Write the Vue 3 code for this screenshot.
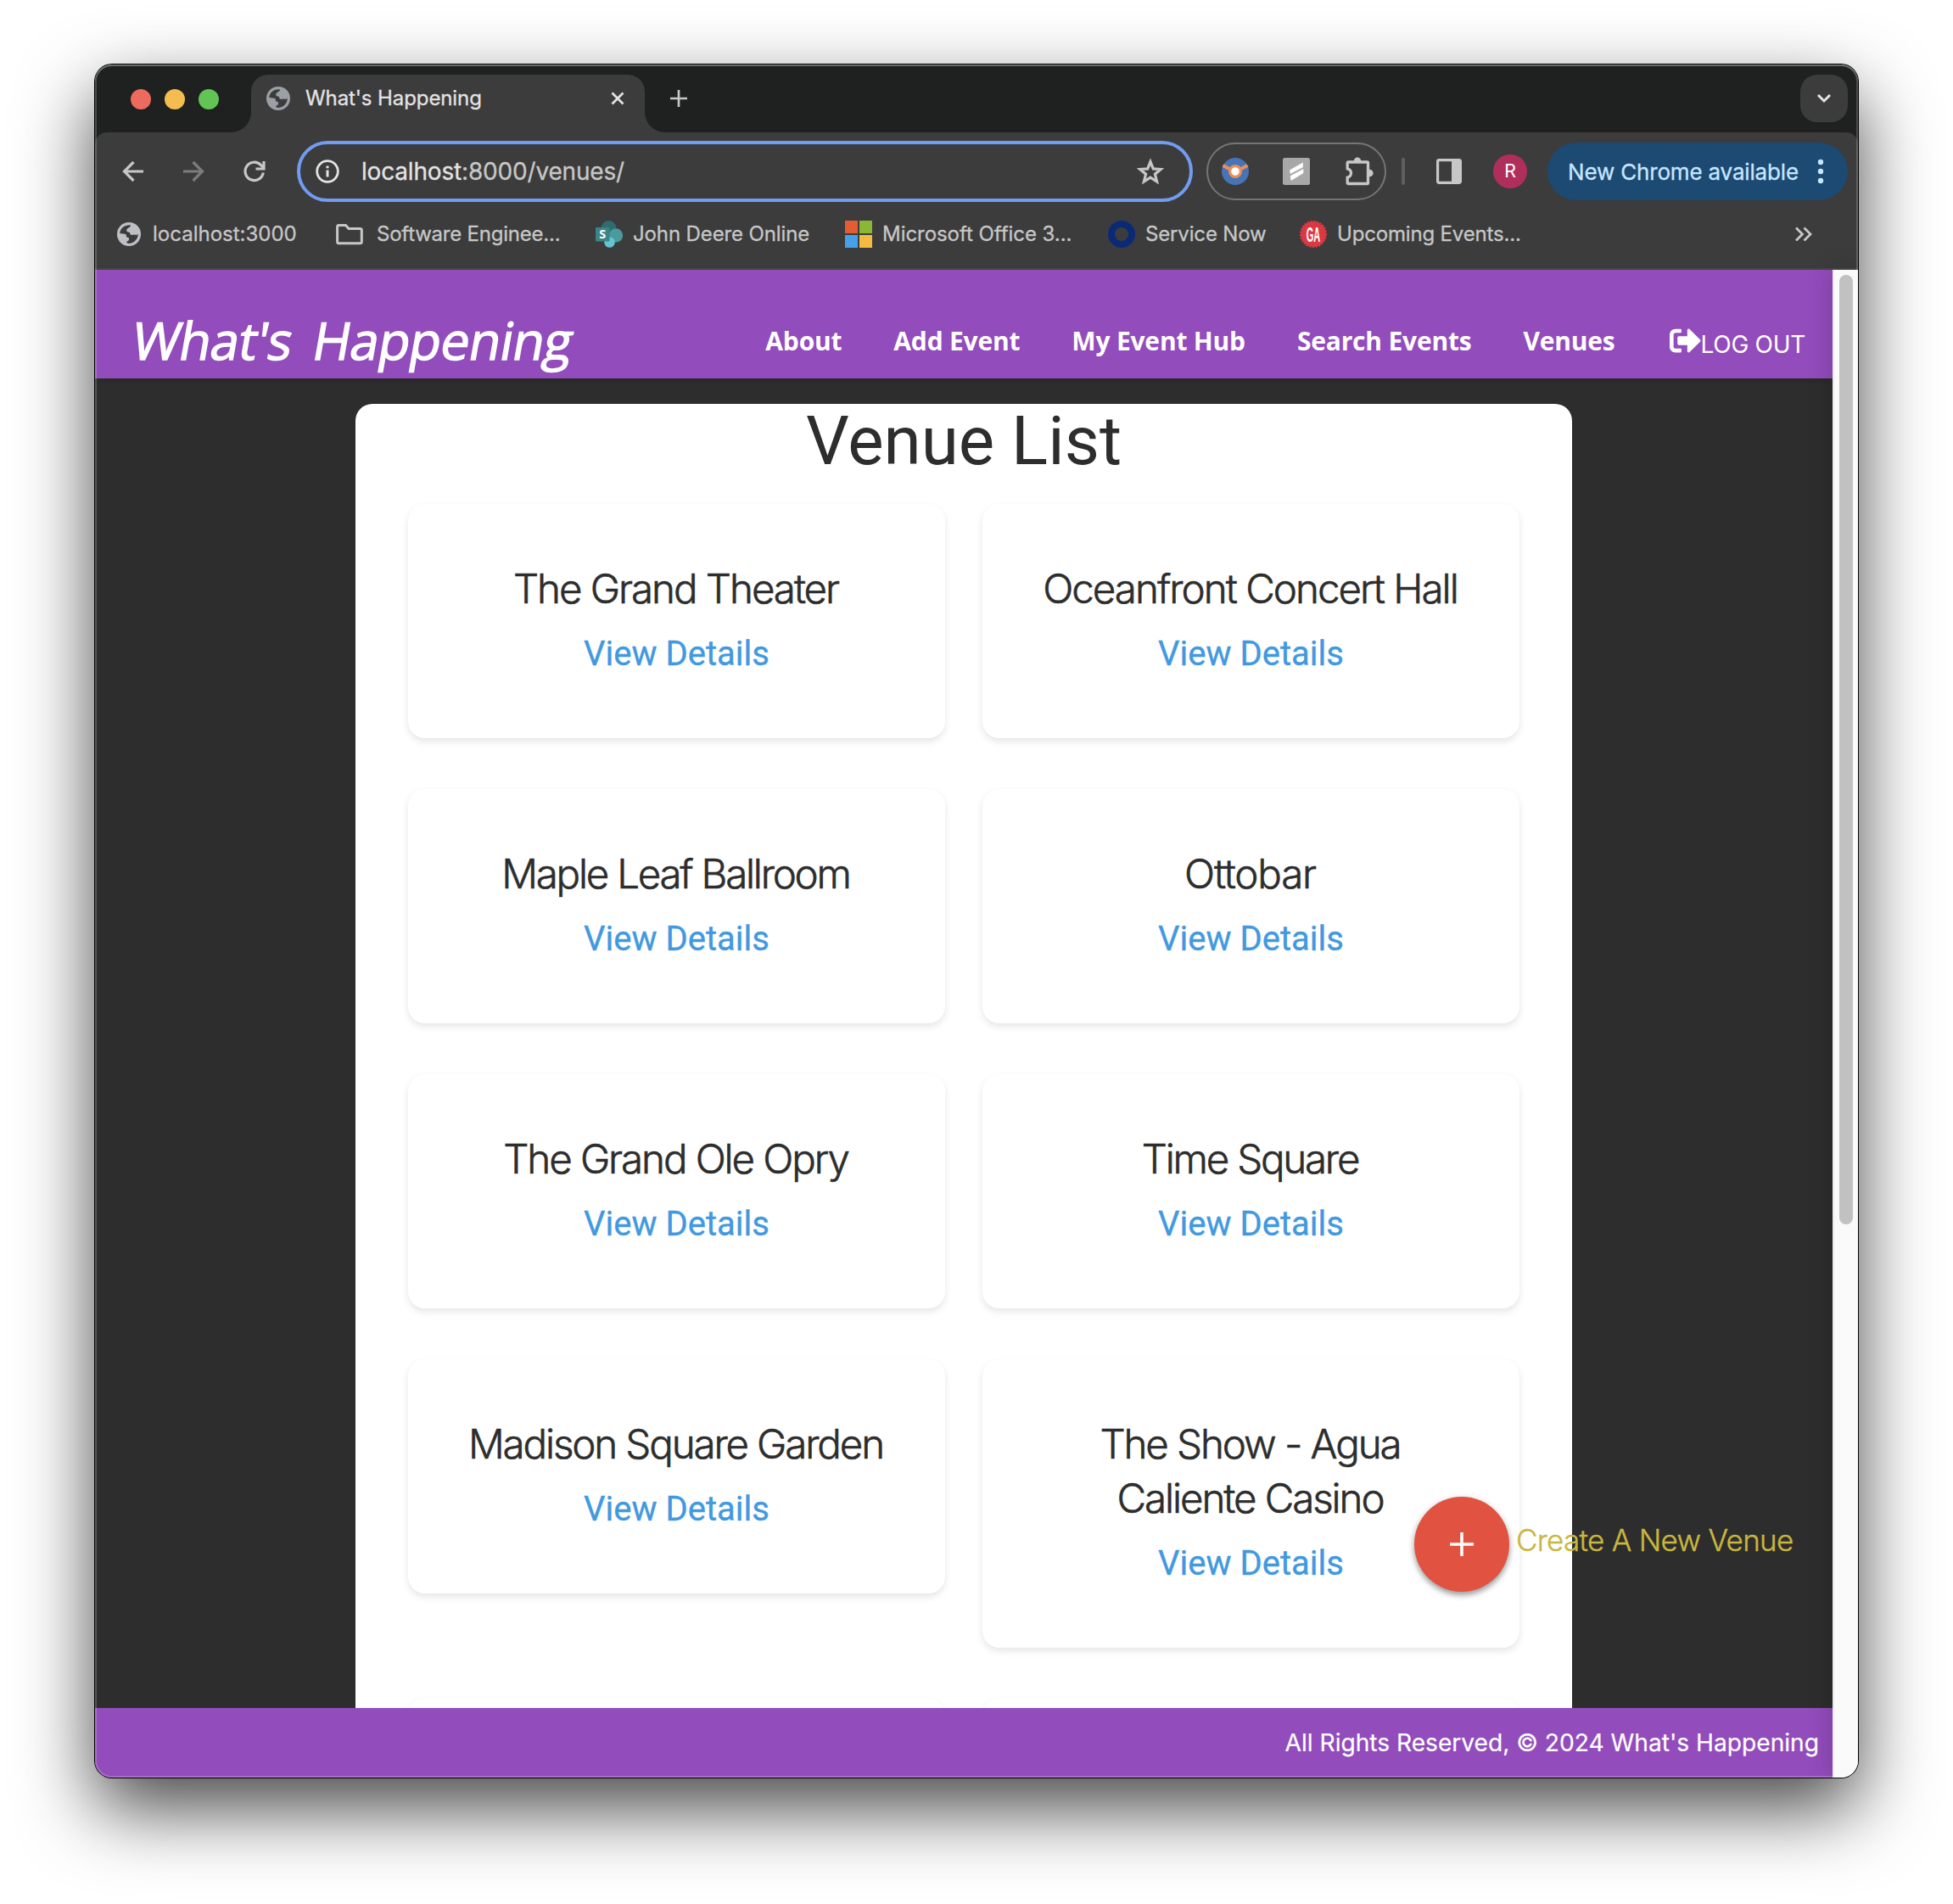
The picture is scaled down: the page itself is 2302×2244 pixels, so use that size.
<script setup>
const bookmarks = [
  { icon: 'globe', label: 'localhost:3000', width: 260, ls: 0 },
  { icon: 'folder', label: 'Software Enginee...', width: 306, pad: 16, ls: -0.22 },
  { icon: 'sharepoint', label: 'John Deere Online', width: 294, ls: -0.12 },
  { icon: 'microsoft', label: 'Microsoft Office 3...', width: 310, pad: 12, ls: -0.05 },
  { icon: 'ring', label: 'Service Now', width: 226, ls: -0.15 },
  { icon: 'ga', label: 'Upcoming Events...', width: 300, ls: -0.17 }
]
const links = ['About', 'Add Event', 'My Event Hub', 'Search Events', 'Venues']
const venues = [
  { name: 'The Grand Theater', ls: -2.05 },
  { name: 'Oceanfront Concert Hall', ls: -2 },
  { name: 'Maple Leaf Ballroom', ls: -2.25 },
  { name: 'Ottobar', ls: -1.2 },
  { name: 'The Grand Ole Opry', ls: -2.1 },
  { name: 'Time Square', ls: -2.25 },
  { name: 'Madison Square Garden', ls: -2.15 },
  { name: 'The Show - Agua Caliente Casino', ls: -2.1 },
  { name: '' },
  { name: '' }
]
</script>

<template>
  <div class="desktop">
    <div class="window">
      <div class="chrome">
        <div class="tabstrip">
          <div class="lights"><i class="red"></i><i class="yellow"></i><i class="green"></i></div>
          <div class="tab">
            <svg width="28" height="28" viewBox="0 0 28 28">
              <circle cx="14" cy="14" r="14" fill="#9aa0a6" />
              <path d="M3.2 13C3.700 7 8.500 3.200 14.500 3.200C17 3.200 16 5.200 13.500 6.500C10.500 8 10.500 11.200 13.200 11.400C15.500 11.600 15.500 12.600 15.300 14.200C17.500 15.500 20 14.800 20.800 14.600C23 15.300 24 14.800 24.700 13.300C25 20 20 24.900 13.800 24.900C11 24.700 11 23.600 11.500 22.600C14.600 21.900 14.200 19.200 13.800 18.200C10.800 18 10.900 16.500 10.600 14.200C8.500 13.300 5.500 13.600 3.200 13Z" fill="#3c3c3c" />
            </svg>
            <span class="tab-title">What's Happening</span>
            <svg class="close" width="16" height="16" viewBox="0 0 16 16"><path d="M1.500 1.500L14.500 14.500M14.500 1.500L1.500 14.500" stroke="#e3e3e3" stroke-width="2.800" /></svg>
          </div>
          <svg class="newtab" width="20" height="20" viewBox="0 0 20 20"><path d="M10 0V20M0 10H20" stroke="#c7c7c7" stroke-width="2.700" /></svg>
          <div class="tab-search"><svg width="18" height="12" viewBox="0 0 18 12"><path d="M2 2L9 9L16 2" fill="none" stroke="#e3e3e3" stroke-width="3" /></svg></div>
        </div>

        <div class="toolbar">
          <svg class="back" width="26" height="26" viewBox="0 0 26 26"><path d="M25 13H3M13.500 2L2.500 13L13.500 24" fill="none" stroke="#c7c7c7" stroke-width="3.200" /></svg>
          <svg class="forward" width="26" height="26" viewBox="0 0 26 26"><path d="M1 13H23M12.500 2L23.500 13L12.500 24" fill="none" stroke="#7c7c7c" stroke-width="3.200" /></svg>
          <svg class="reload" width="26" height="26" viewBox="0 0 26 26">
            <path d="M23.300 14.500A10.700 10.700 0 1 1 20.300 5.300L23.500 8.500" fill="none" stroke="#c7c7c7" stroke-width="3.200" />
            <path d="M24 1V10H14.500" fill="none" stroke="#c7c7c7" stroke-width="3.200" />
          </svg>
          <div class="omnibox">
            <svg width="28" height="28" viewBox="0 0 28 28">
              <circle cx="14" cy="14" r="12.300" fill="none" stroke="#e3e3e3" stroke-width="2.800" />
              <path d="M14 12.500V20.500M14 7.500V10.300" stroke="#e3e3e3" stroke-width="3" />
            </svg>
            <span class="url">localhost<em>:8000/venues/</em></span>
            <svg class="star" width="32" height="31" viewBox="0 0 32 31"><path d="M16 3.600L19.300 11.900L28.200 12.500L21.400 18.200L23.600 27L16 22.200L8.400 27L10.600 18.200L3.800 12.500L12.700 11.900Z" fill="none" stroke="#c7c7c7" stroke-width="3.200" /></svg>
          </div>
          <div class="extensions">
            <svg width="32" height="32" viewBox="0 0 32 32">
              <circle cx="16" cy="16" r="16" fill="#4674b8" />
              <path d="M1.500 9L10 13.500M30.500 9L22 13.500" stroke="#ec8f57" stroke-width="4" />
              <circle cx="16" cy="16" r="6.400" fill="#fff" stroke="#ec8f57" stroke-width="3.200" />
            </svg>
            <svg class="slashes" width="32" height="32" viewBox="0 0 32 32">
              <rect width="32" height="32" rx="2.500" fill="#a8a8a8" />
              <path d="M8.500 14.500L23.500 6V11L9 18.500Z M9 21.500L24 13.500V18L10 26.500Z" fill="#fff" stroke="#fff" stroke-width=".6" stroke-linejoin="round" />
            </svg>
            <svg width="34" height="34" viewBox="0 0 34 34">
              <circle cx="15" cy="4.700" r="4.200" fill="#c7c7c7" />
              <circle cx="29.300" cy="19" r="4.300" fill="#c7c7c7" />
              <path d="M4.500 6H26.500Q27.500 6 27.500 7V30.500Q27.500 31.500 26.500 31.500H4.500Q3.200 31.500 3.200 30.500V24Q7.500 23 7.500 19T3.200 13.800V7Q3.200 6 4.500 6Z" fill="#3c3c3c" stroke="#c7c7c7" stroke-width="3.300" />
            </svg>
          </div>
          <i class="divider"></i>
          <svg class="panel" width="30" height="30" viewBox="0 0 30 30">
            <rect x="1.600" y="1.600" width="26.800" height="26.800" rx="1.800" fill="none" stroke="#c7c7c7" stroke-width="3.200" />
            <path d="M18 1H28V29H18Z" fill="#c7c7c7" />
          </svg>
          <div class="avatar">R</div>
          <div class="update">
            <span>New Chrome available</span>
            <svg width="8" height="30" viewBox="0 0 8 30"><g fill="#c7e6ff"><circle cx="4" cy="4" r="3.200" /><circle cx="4" cy="15" r="3.200" /><circle cx="4" cy="26" r="3.200" /></g></svg>
          </div>
        </div>

        <div class="bookmarks">
          <div v-for="b in bookmarks" :key="b.label" class="bookmark" :style="{ width: b.width + 'px' }">
            <svg width="32" height="32" viewBox="0 0 32 32">
              <g v-if="b.icon === 'globe'" transform="translate(2 2)">
                <circle cx="14" cy="14" r="14" fill="#bdc1c6" />
                <path d="M3.2 13C3.700 7 8.500 3.200 14.500 3.200C17 3.200 16 5.200 13.500 6.500C10.500 8 10.500 11.200 13.200 11.400C15.500 11.600 15.500 12.600 15.300 14.200C17.500 15.500 20 14.800 20.800 14.600C23 15.300 24 14.800 24.700 13.300C25 20 20 24.900 13.800 24.900C11 24.700 11 23.600 11.500 22.600C14.600 21.900 14.200 19.200 13.800 18.200C10.800 18 10.900 16.500 10.600 14.200C8.500 13.300 5.500 13.600 3.200 13Z" fill="#3c3c3c" />
              </g>
              <path v-else-if="b.icon === 'folder'" d="M2.500 5.500H11.500L15 9.500H28.500Q30.300 9.500 30.300 11.300V25Q30.300 26.800 28.500 26.800H3.500Q1.600 26.800 1.600 25V7.300Q1.600 5.500 3.500 5.500Z" fill="none" stroke="#c7c7c7" stroke-width="3" />
              <g v-else-if="b.icon === 'sharepoint'">
                <circle cx="15.500" cy="9" r="9" fill="#2f6c70" />
                <circle cx="24" cy="17.500" r="8.200" fill="#4a9a9e" />
                <circle cx="16.500" cy="25.500" r="6.300" fill="#62c5cf" />
                <rect x="0" y="8" width="16.500" height="16.500" rx="1" fill="#39858a" />
                <text x="8.200" y="21.300" text-anchor="middle" class="sp">S</text>
              </g>
              <g v-else-if="b.icon === 'microsoft'">
                <path d="M0 0H15V15H0Z" fill="#e25d33" /><path d="M17 0H32V15H17Z" fill="#8bb833" />
                <path d="M0 17H15V32H0Z" fill="#47a1e8" /><path d="M17 17H32V32H17Z" fill="#f5ba41" />
              </g>
              <circle v-else-if="b.icon === 'ring'" cx="16" cy="16" r="12" fill="none" stroke="#0a2a76" stroke-width="8" />
              <g v-else>
                <circle cx="16" cy="16" r="14.800" fill="#dc3843" />
                <circle cx="16" cy="16" r="15" fill="none" stroke="#dc3843" stroke-width="2" stroke-dasharray="2.400 1.300" />
                <text transform="translate(16 24.600) scale(.46 1)" text-anchor="middle" class="ga">GA</text>
              </g>
            </svg>
            <span :style="{ paddingLeft: (b.pad || 12) + 'px', letterSpacing: b.ls + 'px' }">{{ b.label }}</span>
          </div>
          <svg class="more" width="22" height="18" viewBox="0 0 22 18"><path d="M2 1.500L9.500 9L2 16.500M11.500 1.500L19 9L11.500 16.500" fill="none" stroke="#c7c7c7" stroke-width="2.800" /></svg>
        </div>
      </div>

      <div class="viewport">
        <div class="page">
          <header class="nav">
            <h1>What's Happening</h1>
            <nav>
              <a v-for="l in links" :key="l">{{ l }}</a>
              <a class="logout">
                <svg width="37" height="37" viewBox="0 0 512 512"><path fill="#fff" d="M497 273L329 441c-15 15-41 4.500-41-17v-96H152c-13.300 0-24-10.700-24-24v-96c0-13.300 10.700-24 24-24h136V88c0-21.400 25.900-32 41-17l168 168c9.300 9.400 9.300 24.600 0 34zM192 436v-40c0-6.600-5.400-12-12-12H96c-17.700 0-32-14.300-32-32V160c0-17.700 14.300-32 32-32h84c6.600 0 12-5.400 12-12V76c0-6.600-5.400-12-12-12H96c-53 0-96 43-96 96v192c0 53 43 96 96 96h84c6.600 0 12-5.400 12-12z" /></svg>
                <span>LOG OUT</span>
              </a>
            </nav>
          </header>
          <main class="content">
            <section class="sheet">
              <h2>Venue List</h2>
              <div class="grid">
                <article v-for="(v, i) in venues" :key="i" class="card">
                  <template v-if="v.name">
                    <h3 :style="{ letterSpacing: v.ls + 'px' }">{{ v.name }}</h3>
                    <a>View Details</a>
                  </template>
                </article>
              </div>
            </section>
          </main>
          <footer class="footer">All Rights Reserved, © 2024 What's Happening</footer>
          <div class="create">
            <span class="fab"><svg width="28" height="28" viewBox="0 0 28 28"><path d="M14 0V28M0 14H28" stroke="#fff" stroke-width="3.600" /></svg></span>
            <span class="create-label">Create A New Venue</span>
          </div>
        </div>
        <div class="scrollbar"><i></i></div>
      </div>
    </div>
  </div>
</template>

<style>
html, body { margin: 0; background: #fff; overflow: hidden; }
</style>

<style scoped>
* { box-sizing: border-box; }
svg { display: block; flex: none; overflow: visible; }
.desktop {
  width: 2302px; height: 2244px; padding: 76px 112px 0;
  overflow: hidden; background: #fff;
  font-family: Inter, "Liberation Sans", sans-serif;
}
.window {
  position: relative; width: 2078px; height: 2019px;
  display: flex; flex-direction: column;
  border-radius: 20px;
  box-shadow: 0 0 0 1px #000, 0 36px 88px rgba(0, 0, 0, .73);
  overflow: hidden;
}
.window::after {
  content: ""; position: absolute; inset: 0; border-radius: 20px; pointer-events: none; z-index: 9;
  box-shadow: inset 0 0 0 2px rgba(255, 255, 255, .2), inset 0 2px 0 rgba(255, 255, 255, .18);
}
.chrome { background: #1f2120; height: 242px; flex: none; }
.tabstrip { height: 80px; display: flex; align-items: flex-start; padding: 12px 12px 0 42px; }
.lights { display: flex; gap: 16px; padding-top: 17px; width: 142px; }
.lights i { width: 24px; height: 24px; border-radius: 50%; }
.red { background: #ec6a5e; }
.yellow { background: #f4bd4f; }
.green { background: #61c454; }
.tab {
  position: relative; width: 464px; height: 68px; background: #3c3c3c;
  border-radius: 20px 20px 0 0; display: flex; align-items: center;
  padding: 0 24px 12px 18px; color: #e3e3e3;
}
.tab::before, .tab::after { content: ""; position: absolute; bottom: 0; width: 24px; height: 24px; }
.tab::before { left: -24px; background: radial-gradient(circle at 0 0, transparent 23.500px, #3c3c3c 24.500px); }
.tab::after { right: -24px; background: radial-gradient(circle at 100% 0, transparent 23.500px, #3c3c3c 24.500px); }
.tab-title { font-size: 24px; line-height: 30px; padding: 0 0 1px 18px; letter-spacing: -.1px; -webkit-text-stroke: .3px #e3e3e3; }
.close { margin-left: auto; }
.newtab { margin: 18px 0 0 30px; }
.tab-search {
  margin-left: auto; width: 56px; height: 56px; border-radius: 20px; background: #3c3c3c;
  display: flex; align-items: center; justify-content: center;
}
.toolbar {
  height: 92px; background: #3c3c3c; border-radius: 14px 14px 0 0;
  display: flex; align-items: center; padding: 0 12px 0 32px;
}
.forward { margin-left: 45px; }
.reload { margin-left: 46px; }
.omnibox {
  width: 1056px; height: 72px; margin-left: 37px; border: 4px solid #719cf1; border-radius: 36px;
  display: flex; align-items: center; padding: 0 30px 0 18px; color: #e3e3e3;
}
.url { font-size: 28px; line-height: 36px; padding-left: 26px; letter-spacing: -.18px; -webkit-text-stroke: .3px currentColor; }
.url em { font-style: normal; color: #c7c7c7; }
.star { margin-left: auto; }
.extensions {
  width: 212px; height: 68px; margin-left: 16px; border: 2px solid #747775; border-radius: 34px;
  display: flex; align-items: center; justify-content: space-between; padding: 0 13px 0 16px;
}
.slashes { margin-right: 2px; }
.divider { width: 4px; height: 32px; border-radius: 2px; background: #5f5f5f; margin-left: 18px; }
.panel { margin-left: 37px; }
.avatar {
  width: 40px; height: 40px; border-radius: 50%; background: #b02e5c; color: #fff; margin-left: 37px;
  text-align: center; font: 22px/40px Roboto, sans-serif;
}
.update {
  width: 354px; height: 68px; border-radius: 34px; background: #1c4a72; color: #c7e6ff; margin-left: auto;
  display: flex; align-items: center; justify-content: space-between; padding: 0 28px 0 24px;
  font-size: 26px; line-height: 34px; letter-spacing: -.17px; -webkit-text-stroke: .3px #c7e6ff;
}
.update span { padding-top: 1px; }
.bookmarks {
  height: 70px; background: #3c3c3c; border-bottom: 2px solid #484848; color: #c7c7c7;
  display: flex; align-items: flex-start; padding: 12px 53px 0 24px;
}
.bookmark { display: flex; align-items: center; height: 32px; font-size: 24px; line-height: 30px; white-space: nowrap; }
.bookmark span { padding-bottom: 1px; -webkit-text-stroke: .3px #c7c7c7; }
.more { margin: 7px 0 0 auto; }
.sp { font: 700 14.500px "Open Sans", sans-serif; fill: #fff; }
.ga { font: 700 24px "Liberation Sans", sans-serif; fill: #fff; }

.viewport { display: flex; height: 1777px; }
.page { position: relative; width: 2048px; height: 1777px; display: flex; flex-direction: column; background: #2d2d2d; }
.nav {
  position: relative; height: 128px; flex: none; background: #924cbc; color: #fff;
  display: flex; align-items: flex-start; padding: 0 32px 0 41px;
  box-shadow: 0 2px 6px rgba(0, 0, 0, .15);
}
h1, h2, h3 { margin: 0; font-weight: 400; }
h1 {
  padding-top: 43px; font: 500 61px/80px "Open Sans", sans-serif; letter-spacing: -.7px; word-spacing: 10px; white-space: nowrap;
  -webkit-text-stroke: 1.300px #fff;
  transform: skewX(-10deg); transform-origin: 0 106px;
}
nav { display: flex; margin-left: auto; gap: 61px; font: 700 30px/40px "Open Sans", sans-serif; letter-spacing: -.2px; padding-top: 64px; }
.logout { display: flex; font: 400 28px/40px Inter, sans-serif; margin-left: 3px; }
.logout svg { margin-top: 1px; }
.logout span { padding-top: 4px; letter-spacing: -.3px; }
.content { height: 1567px; padding: 30px 0 0 307px; overflow: hidden; }
.sheet { width: 1434px; height: 1800px; background: #fff; border-radius: 20px; color: #2d2d2d; padding: 0 62px; }
h2 { font: 400 80px/88px Roboto, sans-serif; text-align: center; }
.grid { display: grid; grid-template-columns: 633px 633px; column-gap: 44px; row-gap: 60px; padding-top: 30px; align-items: start; }
.card {
  min-height: 276px; border-radius: 20px; background: #fff; text-align: center; padding: 68px 68px 75px;
  box-shadow: 0 4px 8px rgba(0, 0, 0, .1);
}
h3 { font-size: 47.500px; line-height: 64px; font-weight: 300; padding-right: 2px; margin: 0 -10px; -webkit-text-stroke: .6px #2d2d2d; }
.card:nth-child(8) h3 { margin: 0 40px; }
.card a { display: block; margin-top: 15px; font: 400 40px/60px Roboto, sans-serif; color: #4299e0; height: 54px; -webkit-text-stroke: .35px #4299e0; }
.footer {
  height: 82px; flex: none; background: #924cbc; color: #fff; text-align: right;
  font-size: 28.200px; line-height: 83px; padding-right: 16px; letter-spacing: -.03px; -webkit-text-stroke: .2px #fff;
}
.create { position: absolute; left: 1555px; top: 1446px; display: flex; }
.fab {
  width: 112px; height: 112px; border-radius: 50%; background: #e25241;
  display: flex; align-items: center; justify-content: center;
  box-shadow: 0 4px 6px rgba(0, 0, 0, .3), 0 2px 10px rgba(0, 0, 0, .15);
}
.create-label {
  color: #c9b73f; font-size: 35px; font-weight: 300; line-height: 103px; padding-left: 8px;
  letter-spacing: -.7px; white-space: nowrap; -webkit-text-stroke: .4px #c9b73f;
}
.scrollbar { position: relative; width: 30px; background: #fafafa; border-left: 2px solid #ececec; box-shadow: 0 0 30px rgba(0, 0, 0, .2); padding: 6px 6px 0; }
.scrollbar i { display: block; width: 16px; height: 1119px; border-radius: 8px; background: #c1c1c1; }
</style>
